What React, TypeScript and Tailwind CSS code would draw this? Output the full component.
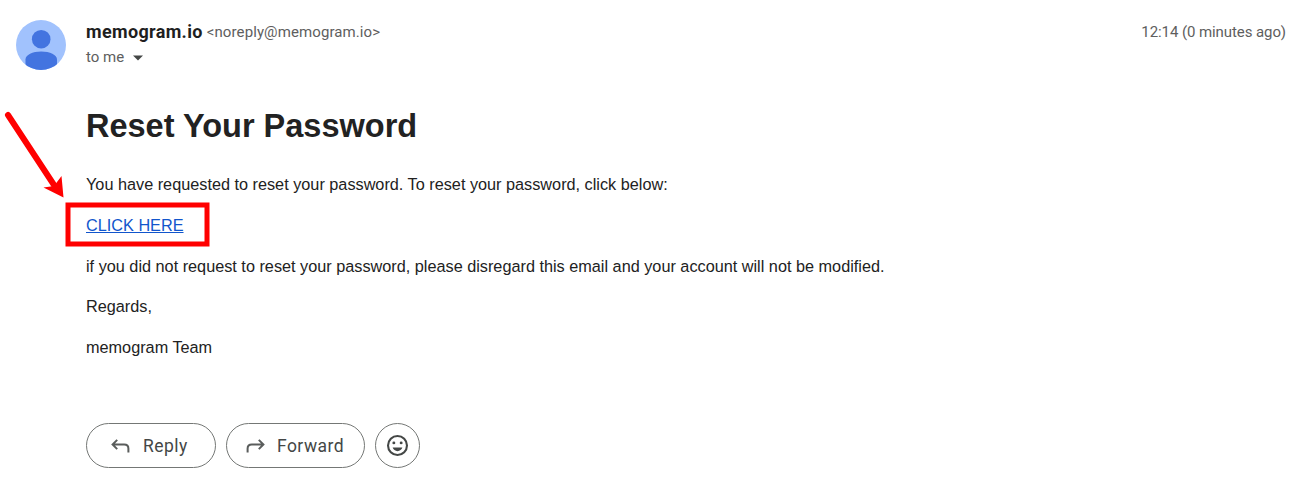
const paragraph = "mt-[16.25px] leading-[24.375px]";

const Avatar = () => {
  return (
    <svg className="size-[50px] shrink-0" viewBox="0 0 50 50" aria-hidden="true">
      <clipPath id="avatar-clip">
        <circle cx="25" cy="25" r="25" />
      </clipPath>
      <g clipPath="url(#avatar-clip)">
        <rect width="50" height="50" fill="#a1c2fd" />
        <circle cx="25.2" cy="19.2" r="9.3" fill="#4374e0" />
        <path d="M9.5 55V39.5c0-4.5 7-8 15.7-8S41 35 41 39.5V55z" fill="#4374e0" />
      </g>
    </svg>
  );
};

const ReplyIcon = () => {
  return (
    <svg width="20" height="16" viewBox="0 0 20 16" fill="none" stroke="#5a5d5c" strokeWidth="2">
      <path d="M6.2 1.9 1.600 6.500l4.600 4.600M1.600 6.500h11.600c2.500 0 4.200 1.500 4.200 4v4" />
    </svg>
  );
};

const SmileIcon = () => {
  return (
    <svg width="25" height="25" viewBox="0 0 24 24" fill="#444746">
      <circle cx="12" cy="12" r="9.1" fill="none" stroke="#444746" strokeWidth="2" />
      <circle cx="8.5" cy="9.5" r="1.4" />
      <circle cx="15.5" cy="9.5" r="1.4" />
      <path d="M12 17.5c2.2 0 4-1.5 4.7-3.5H7.3c.7 2 2.5 3.5 4.7 3.5z" />
    </svg>
  );
};

const Header = () => {
  return (
    <header className="flex h-[70px] gap-5 pt-5 pr-[10px] pl-4 font-[Roboto,sans-serif] text-[#5e5e5e]">
      <Avatar />
      <div className="-mt-0.5 flex-1">
        <div className="flex h-[27px] items-center leading-[25px]">
          <h3 className="text-[18px] font-bold tracking-[0.34px] text-[#1f1f1f]">memogram.io</h3>
          <span className="ml-1 pt-0.5 text-[15px] tracking-[0.1px]">&lt;noreply@memogram.io&gt;</span>
          <span className="ml-auto pt-0.5 text-[15px] tracking-[-0.08px]">12:14 (0 minutes ago)</span>
        </div>
        <div className="flex items-center text-[15px] leading-[25px]">
          <span>to me</span>
          <svg className="ml-[9px]" width="10" height="6" viewBox="0 0 10 6">
            <path d="M0 .5h10l-5 5z" fill="#444746" />
          </svg>
        </div>
      </div>
    </header>
  );
};

export default function App() {
  return (
    <main className="relative h-[493px] w-[1296px] overflow-hidden bg-white">
      <Header />
      <article className="pt-9 pl-[86px] font-['Liberation_Sans',Arial,sans-serif] text-[16.25px] text-[#222]">
        <h1 className="text-[32.5px] leading-[40px] font-bold">Reset Your Password</h1>
        <div className="pt-[10px]">
          <p className={paragraph}>
            You have requested to reset your password. To reset your password, click below:
          </p>
          <p className={paragraph}>
            <a href="#" className="text-[#1155cc] underline">CLICK HERE</a>
          </p>
          <p className={paragraph}>
            if you did not request to reset your password, please disregard this email and your account will not be modified.
          </p>
          <p className={paragraph}>Regards,</p>
          <p className={paragraph}>memogram Team</p>
        </div>
      </article>
      <div className="mt-16 flex gap-[10px] pl-[86px] font-[Roboto,sans-serif] text-[17.5px] tracking-[0.45px] text-[#444746]">
        <button className="flex h-[45px] w-[130px] items-center rounded-full border border-[#747775] pl-6">
          <ReplyIcon />
          <span className="ml-3">Reply</span>
        </button>
        <button className="flex h-[45px] w-[139px] items-center rounded-full border border-[#747775] pl-[18px]">
          <span className="-scale-x-100">
            <ReplyIcon />
          </span>
          <span className="ml-3">Forward</span>
        </button>
        <button className="flex size-[45px] items-center justify-center rounded-full border border-[#747775]">
          <SmileIcon />
        </button>
      </div>
      {/* red callout pointing at the link */}
      <svg className="pointer-events-none absolute top-0 left-0" width="220" height="260" viewBox="0 0 220 260">
        <rect x="68" y="205" width="139" height="39" fill="none" stroke="#f00" strokeWidth="5" />
        <path d="M8 115 54 185" stroke="#f00" strokeWidth="6" strokeLinecap="round" />
        <path d="M63.500 197.500 43.500 187.500 54 186 61.500 176z" fill="#f00" />
      </svg>
    </main>
  );
}
